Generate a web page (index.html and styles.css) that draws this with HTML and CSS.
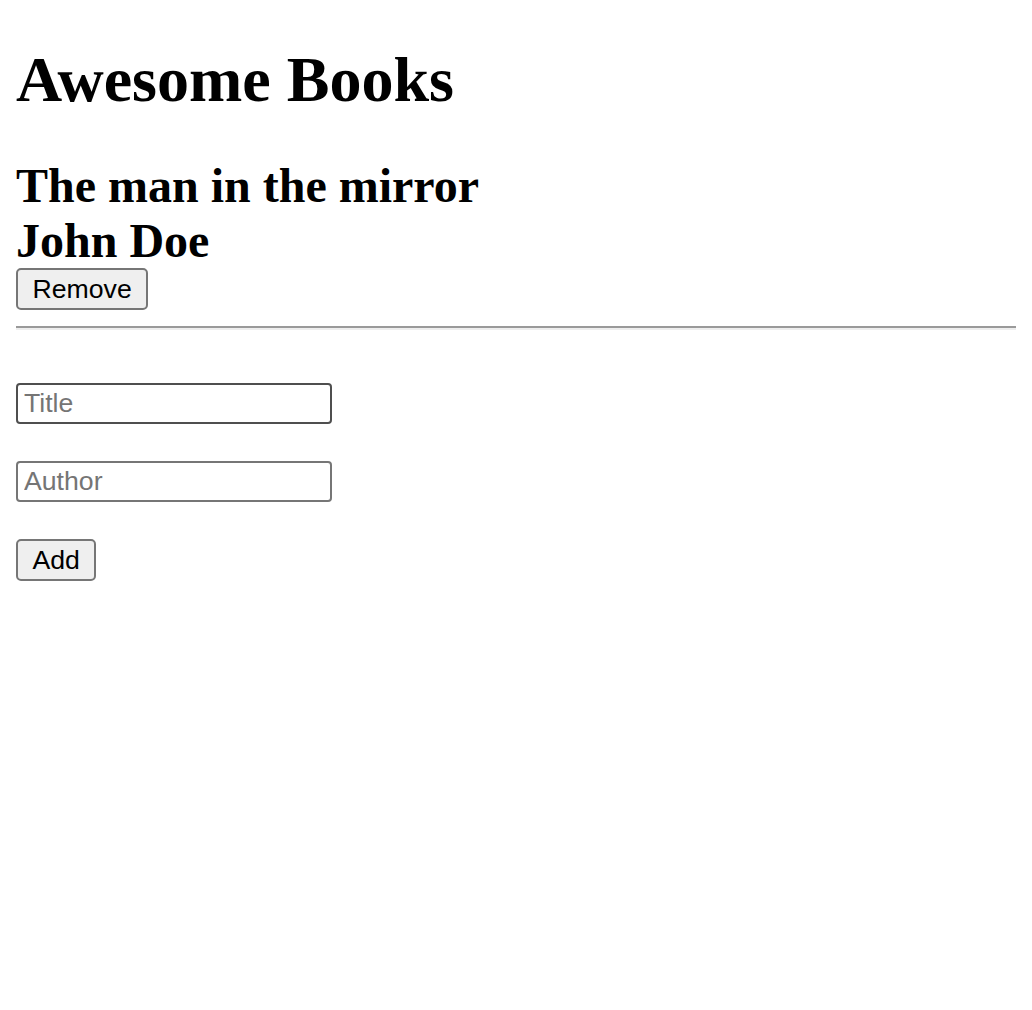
FILE: index.html
```html
<!DOCTYPE html>
<html lang="en">
<head>
<meta charset="utf-8">
<title>Awesome Books</title>
<link rel="stylesheet" href="styles.css">
</head>
<body>
<h1 class="title">Awesome Books</h1>
<section class="books">
  <div class="book">
    <h2 class="book-text">The man in the mirror</h2>
    <h2 class="book-text">John Doe</h2>
    <button class="btn" type="button">Remove</button>
    <hr class="rule">
  </div>
</section>
<form class="add-form">
  <input class="field field-hover" type="text" placeholder="Title">
  <input class="field" type="text" placeholder="Author">
  <button class="btn" type="button">Add</button>
</form>
</body>
</html>
```
FILE: styles.css
```css
html, body {
  background: #ffffff;
}
body {
  margin: 16px;
  font-family: "Liberation Serif", "Times New Roman", serif;
  color: #000;
}
.title {
  font-size: 64px;
  font-weight: bold;
  line-height: 73.5px;
  margin: 26.88px 0 42.88px;
}
.book {
  display: flex;
  flex-direction: column;
  align-items: flex-start;
}
.book-text {
  font-size: 48px;
  font-weight: bold;
  line-height: 54.5px;
  margin: 0;
}
.btn {
  box-sizing: border-box;
  height: 42px;
  font-family: "Liberation Sans", Arial, sans-serif;
  font-size: 26.67px;
  line-height: 30.67px;
  color: #000;
  background: #efefef;
  border: 2px solid #767676;
  border-radius: 5px;
  padding: 0 14.5px;
  margin: 0;
}
.rule {
  align-self: stretch;
  margin: 16px 0;
  border: 0;
  border-top: 2px solid #9a9a9a;
  border-bottom: 2px solid #eeeeee;
  height: 0;
}
.add-form {
  display: flex;
  flex-direction: column;
  align-items: flex-start;
  gap: 37px;
  padding-top: 37px;
}
.field {
  box-sizing: border-box;
  width: 316px;
  height: 41px;
  font-family: "Liberation Sans", Arial, sans-serif;
  font-size: 26.67px;
  padding: 0 6px;
  border: 2px solid #767676;
  border-radius: 4px;
  background: #fff;
  color: #000;
  margin: 0;
}
.field::placeholder {
  color: #757575;
}
.field-hover {
  border-color: #4f4f4f;
}
```
